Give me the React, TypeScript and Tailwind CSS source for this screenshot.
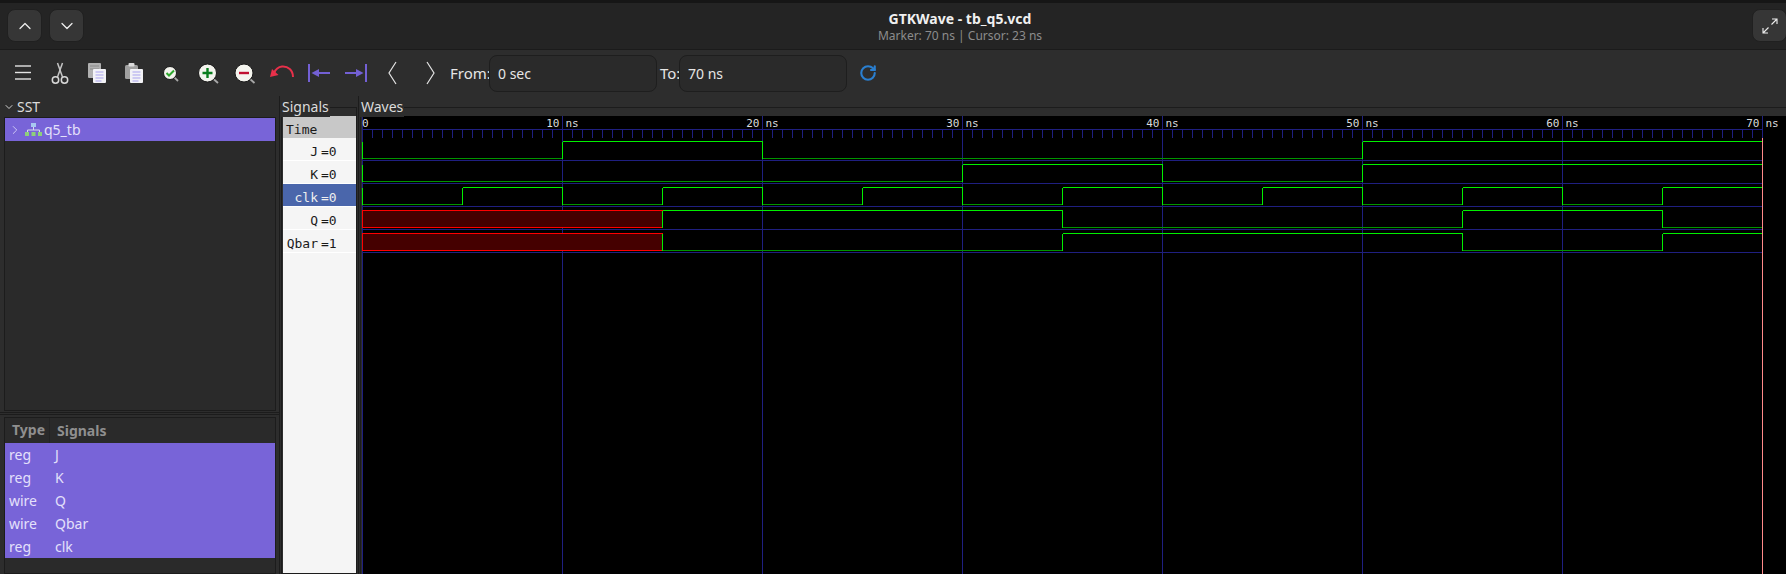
import React from 'react';
import { ChevronDown, ChevronRight, ChevronUp, RotateCw } from 'lucide-react';

const UI_FONT = "font-['Noto_Sans',sans-serif]";
const MONO_FONT = "font-['DejaVu_Sans_Mono',monospace]";

const nsToX = (t: number) => 362.5 + t * 20;

type Level = 0 | 1 | 'x';

interface Trace {
    name: string;
    value: string;
    hi: number;
    changes: [number, Level][];
}

const clkChanges: [number, Level][] = [];
for (let t = 0; t < 70; t += 5) clkChanges.push([t, t % 10 === 0 ? 0 : 1]);

const traces: Trace[] = [
    { name: 'J', value: '=0', hi: 141.5, changes: [[0, 0], [10, 1], [20, 0], [50, 1]] },
    { name: 'K', value: '=0', hi: 164.5, changes: [[0, 0], [30, 1], [40, 0], [50, 1]] },
    { name: 'clk', value: '=0', hi: 187.5, changes: clkChanges },
    { name: 'Q', value: '=0', hi: 210.5, changes: [[0, 'x'], [15, 1], [35, 0], [55, 1], [65, 0]] },
    { name: 'Qbar', value: '=1', hi: 233.5, changes: [[0, 'x'], [15, 0], [35, 1], [55, 0], [65, 1]] },
];

const TraceLines = ({ trace }: { trace: Trace }) => {
    const lo = trace.hi + 17;
    return (
        <g>
            {trace.changes.map(([t, level], i) => {
                const next = i + 1 < trace.changes.length ? trace.changes[i + 1][0] : 70;
                const x1 = nsToX(t);
                const x2 = nsToX(next);
                if (level === 'x') {
                    return <rect key={t} x={x1} y={trace.hi} width={x2 - x1} height={17} fill="#450000" stroke="#ff0000" />;
                }
                return (
                    <g key={t}>
                        <line x1={x1} x2={x2} y1={level ? trace.hi : lo} y2={level ? trace.hi : lo} stroke={level ? '#00f000' : '#009400'} />
                        <line x1={x1} x2={x1} y1={trace.hi} y2={lo} stroke="#00f000" />
                    </g>
                );
            })}
        </g>
    );
};

const WaveCanvas = () => {
    const ticks: number[] = [];
    for (let x = 362.5; x <= 1762.5; x += 10) ticks.push(x);
    return (
        <svg width={1424} height={458} viewBox="362 116 1424 458" className="block bg-black" shapeRendering="crispEdges">
            {ticks.map((x) => (
                <line key={x} x1={x} x2={x} y1={129} y2={138} stroke="#1f1f80" />
            ))}
            <line x1={362} x2={1763} y1={129.5} y2={129.5} stroke="#1f1f80" />
            {[160.5, 183.5, 206.5, 229.5, 252.5].map((y) => (
                <line key={y} x1={362} x2={1762} y1={y} y2={y} stroke="#1f1f80" />
            ))}
            {[0, 10, 20, 30, 40, 50, 60].map((t) => (
                <line key={t} x1={nsToX(t)} x2={nsToX(t)} y1={116} y2={574} stroke="#1f1f80" />
            ))}
            <line x1={1762.5} x2={1762.5} y1={116} y2={138} stroke="#1f1f80" />
            <g fontFamily="'DejaVu Sans Mono', monospace" fontSize={11} fill="#dcdcdc" shapeRendering="auto">
                <text x={362} y={127}>0</text>
                {[10, 20, 30, 40, 50, 60, 70].map((t) => (
                    <g key={t}>
                        <text x={nsToX(t) - 3} y={127} textAnchor="end">{t}</text>
                        <text x={nsToX(t) + 3} y={127}>ns</text>
                    </g>
                ))}
            </g>
            {traces.map((trace) => (
                <TraceLines key={trace.name} trace={trace} />
            ))}
            <line x1={1762.5} x2={1762.5} y1={138} y2={574} stroke="#ff8a8a" />
        </svg>
    );
};

const ToolIcon = ({ children }: { children: React.ReactNode }) => (
    <svg width={37} height={46} viewBox="0 0 37 46" className="shrink-0">
        {children}
    </svg>
);

const DocLines = ({ x, y }: { x: number; y: number }) => (
    <g stroke="#a9a3ee" strokeWidth={1}>
        <line x1={x} x2={x + 8} y1={y} y2={y} />
        <line x1={x} x2={x + 8} y1={y + 3} y2={y + 3} />
        <line x1={x} x2={x + 8} y1={y + 6} y2={y + 6} />
        <line x1={x} x2={x + 6} y1={y + 9} y2={y + 9} />
    </g>
);

const Magnifier = ({ cx, cy, r, hx, hy, children }: { cx: number; cy: number; r: number; hx: number; hy: number; children: React.ReactNode }) => (
    <g>
        <line x1={cx + r * 0.7} y1={cy + r * 0.7} x2={hx} y2={hy} stroke="#a8a8a8" strokeWidth={1.8} />
        <circle cx={cx} cy={cy} r={r} fill="#f4f4ee" stroke="#1a1a1a" strokeWidth={1} />
        {children}
    </g>
);

const ToolbarIcons = () => (
    <>
        <ToolIcon>
            <g stroke="#e4e4e4" strokeWidth={1.4}>
                <line x1={10} x2={26} y1={16} y2={16} />
                <line x1={10} x2={26} y1={22.5} y2={22.5} />
                <line x1={10} x2={26} y1={29} y2={29} />
            </g>
        </ToolIcon>
        <ToolIcon>
            <g fill="none" stroke="#c4c4c4" strokeWidth={1.5}>
                <path d="M15.5 13L20.5 27" />
                <path d="M20.5 13L15.5 27" />
                <circle cx={13.5} cy={30} r={3.2} stroke="#d8d8d8" />
                <circle cx={22.5} cy={30} r={3.2} stroke="#d8d8d8" />
            </g>
        </ToolIcon>
        <ToolIcon>
            <rect x={9} y={13} width={13} height={15} rx={1} fill="#b0b0b0" />
            <line x1={11} x2={20} y1={16} y2={16} stroke="#8a8a8a" />
            <line x1={11} x2={20} y1={19} y2={19} stroke="#8a8a8a" />
            <rect x={14} y={19} width={13} height={14} rx={1} fill="#f2f2f6" />
            <DocLines x={16.5} y={22} />
        </ToolIcon>
        <ToolIcon>
            <rect x={9} y={15} width={13} height={14} rx={1.5} fill="#a0a0a0" />
            <rect x={12.5} y={13} width={6} height={3.5} rx={1} fill="#dcdcdc" />
            <rect x={14} y={19} width={13} height={14} rx={1} fill="#f2f2f6" />
            <DocLines x={16.5} y={22} />
        </ToolIcon>
        <ToolIcon>
            <Magnifier cx={17} cy={23} r={6.5} hx={25} hy={31}>
                <path d="M13.5 23L16 25.5L21 20.5" fill="none" stroke="#2ea82e" strokeWidth={2} />
            </Magnifier>
        </ToolIcon>
        <ToolIcon>
            <Magnifier cx={17.5} cy={23} r={9} hx={28} hy={33}>
                <path d="M12.5 23H22.5M17.5 18V28" stroke="#0a7d1e" strokeWidth={2.4} />
            </Magnifier>
        </ToolIcon>
        <ToolIcon>
            <Magnifier cx={17} cy={23} r={9} hx={27.5} hy={33}>
                <path d="M12 23H22" stroke="#c01030" strokeWidth={2.4} />
            </Magnifier>
        </ToolIcon>
        <ToolIcon>
            <path d="M29 27C29 20 24 16 18 16.5C14 17 11.5 19.5 10 23" fill="none" stroke="#e8304a" strokeWidth={2} />
            <path d="M6 27L8 19L14.5 25Z" fill="#e8304a" />
        </ToolIcon>
        <ToolIcon>
            <line x1={8} x2={8} y1={14} y2={32} stroke="#7360d4" strokeWidth={2} />
            <line x1={16} x2={29} y1={23} y2={23} stroke="#7360d4" strokeWidth={2} />
            <path d="M10.5 23L18 19V27Z" fill="#7360d4" />
        </ToolIcon>
        <ToolIcon>
            <line x1={28} x2={28} y1={14} y2={32} stroke="#7360d4" strokeWidth={2} />
            <line x1={7} x2={20} y1={23} y2={23} stroke="#7360d4" strokeWidth={2} />
            <path d="M25.5 23L18 19V27Z" fill="#7360d4" />
        </ToolIcon>
        <ToolIcon>
            <path d="M21 12L14 23L21 34" fill="none" stroke="#e4e4e4" strokeWidth={1.2} />
        </ToolIcon>
        <ToolIcon>
            <path d="M15 12L22 23L15 34" fill="none" stroke="#e4e4e4" strokeWidth={1.2} />
        </ToolIcon>
    </>
);

const TreeIcon = () => (
    <svg width={17} height={14} viewBox="0 0 17 14" className="shrink-0">
        <rect x={6} y={0} width={5} height={4} fill="#a8c8f0" />
        <path d="M8.5 4V7M2.5 9V7H14.5V9" fill="none" stroke="#d8d8f0" />
        <rect x={0} y={9} width={4} height={4} fill="#8ed07a" />
        <rect x={6.5} y={9} width={4} height={4} fill="#8ed07a" />
        <rect x={13} y={9} width={4} height={4} fill="#8ed07a" />
    </svg>
);

const ExpandIcon = () => (
    <svg width={16} height={16} viewBox="0 0 16 16">
        <path d="M9.5 6.5L15 1M10 1H15V6M6.5 9.5L1 15M1 10V15H6" fill="none" stroke="#eeeeee" strokeWidth={1.1} />
    </svg>
);

const signalRows = [
    ['reg', 'J'],
    ['reg', 'K'],
    ['wire', 'Q'],
    ['wire', 'Qbar'],
    ['reg', 'clk'],
];

const TextBox = ({ value }: { value: string }) => (
    <div className="flex h-[37px] w-[168px] items-center rounded-lg border border-[#1e1e1e] bg-[#2a2a2a] px-2 text-[14px] text-[#e6e6e6]">
        {value}
    </div>
);

const HeaderButton = ({ children }: { children: React.ReactNode }) => (
    <div className="flex h-[33px] w-[35px] shrink-0 items-center justify-center rounded-lg border border-[#202020] bg-[#363636] text-[#eeeeee]">
        {children}
    </div>
);

export default function App() {
    return (
        <div className={`flex h-[574px] w-[1786px] flex-col overflow-hidden bg-[#2d2d2d] ${UI_FONT}`}>
            <div className="h-[3px] shrink-0 bg-[#161616]" />
            <div className="flex h-[47px] shrink-0 items-center justify-between border-b border-[#1b1b1b] bg-[#242424] pb-[1px] pl-[7px]">
                <div className="flex w-[327px] gap-[7px]">
                    <HeaderButton>
                        <ChevronUp size={20} strokeWidth={1.5} />
                    </HeaderButton>
                    <HeaderButton>
                        <ChevronDown size={20} strokeWidth={1.5} />
                    </HeaderButton>
                </div>
                <div className="flex flex-col items-center pt-[1px]">
                    <div className="text-[14px] leading-[18px] font-bold text-[#f0f0f0]">GTKWave - tb_q5.vcd</div>
                    <div className="text-[12px] leading-[15px] text-[#8c8c8c]">Marker: 70 ns  |  Cursor: 23 ns</div>
                </div>
                <div className="flex w-[200px] justify-end">
                    <div className="-mr-[1px]">
                        <HeaderButton>
                            <ExpandIcon />
                        </HeaderButton>
                    </div>
                </div>
            </div>

            <div className="flex h-[46px] shrink-0 items-center pl-[5px] text-[15px] text-[#e6e6e6]">
                <ToolbarIcons />
                <span className="ml-[1px] w-[39px]">From:</span>
                <TextBox value="0 sec" />
                <span className="ml-[3px] w-[19px]">To:</span>
                <TextBox value="70 ns" />
                <RotateCw size={18} strokeWidth={2.8} className="ml-[12px] text-[#2a7fd0]" />
            </div>

            <div className="flex min-h-0 flex-1">
                <div className="flex w-[279px] shrink-0 flex-col">
                    <div className="flex h-[21px] items-center pl-[3px] text-[14px] text-[#dcdcdc]">
                        <ChevronDown size={12} className="text-[#cfcfcf]" />
                        <span className="ml-[2px]">SST</span>
                    </div>
                    <div className="ml-[4px] mr-[3px] h-[294px] border border-[#1c1c1c] bg-[#2a2a2a]">
                        <div className="flex h-[23px] items-center bg-[#7864d8] pl-[3px] text-[14px] text-[#e4e0fb]">
                            <ChevronRight size={14} strokeWidth={1.5} className="shrink-0 text-[#d8d4f8]" />
                            <span className="ml-[3px]"><TreeIcon /></span>
                            <span className="ml-[2px]">q5_tb</span>
                        </div>
                    </div>
                    <div className="mt-[1px] mb-[2px] h-[3px] border-t border-b border-[#1c1c1c]" />
                    <div className="ml-[4px] mr-[3px] min-h-0 flex-1 border border-[#1c1c1c] bg-[#2a2a2a]">
                        <div className="flex h-[25px] items-center text-[14px] font-bold text-[#8f8f8f]">
                            <span className="h-full w-[45px] border-r border-[#242424] pl-[7px] leading-[24px]">Type</span>
                            <span className="pl-[7px]">Signals</span>
                        </div>
                        {signalRows.map(([type, name]) => (
                            <div key={type + name} className="flex h-[23px] items-center bg-[#7864d8] text-[14px] text-[#e4e0fb]">
                                <span className="w-[50px] pl-[4px]">{type}</span>
                                <span>{name}</span>
                            </div>
                        ))}
                    </div>
                </div>

                <div className="flex w-[79px] shrink-0 border-l border-[#1c1c1c] pl-[1px]">
                    <div className="relative mt-[11px] mr-[1px] flex-1 border border-[#1c1c1c] pt-[8px] pl-[1px]">
                        <span className="absolute -top-[11px] -left-px bg-[#2d2d2d] pr-[1px] pl-px text-[14px] leading-[20px] text-[#dcdcdc]">Signals</span>
                        <div className={`h-full bg-[#f5f5f5] text-[13px] leading-[17px] text-[#1a1a1a] ${MONO_FONT}`}>
                            <div className="flex h-[22px] items-end bg-[#c8c8c8] pl-[3px]">Time</div>
                            {traces.map((trace) => (
                                <div
                                    key={trace.name}
                                    className={`flex h-[23px] items-end border-b border-white ${trace.name === 'clk' ? 'bg-[#4a66ab] text-[#eeeeee]' : ''}`}
                                >
                                    <span className="w-[35px] text-right">{trace.name}</span>
                                    <span className="ml-[3px]">{trace.value}</span>
                                </div>
                            ))}
                        </div>
                    </div>
                </div>

                <div className="flex min-w-0 flex-1 border-l border-[#1c1c1c] pl-[1px]">
                    <div className="relative mt-[11px] flex-1 border-t border-l border-[#1c1c1c] pt-[8px] pl-[1px]">
                        <span className="absolute -top-[11px] -left-px bg-[#2d2d2d] pr-[1px] pl-px text-[14px] leading-[20px] text-[#dcdcdc]">Waves</span>
                        <WaveCanvas />
                    </div>
                </div>
            </div>
        </div>
    );
}
